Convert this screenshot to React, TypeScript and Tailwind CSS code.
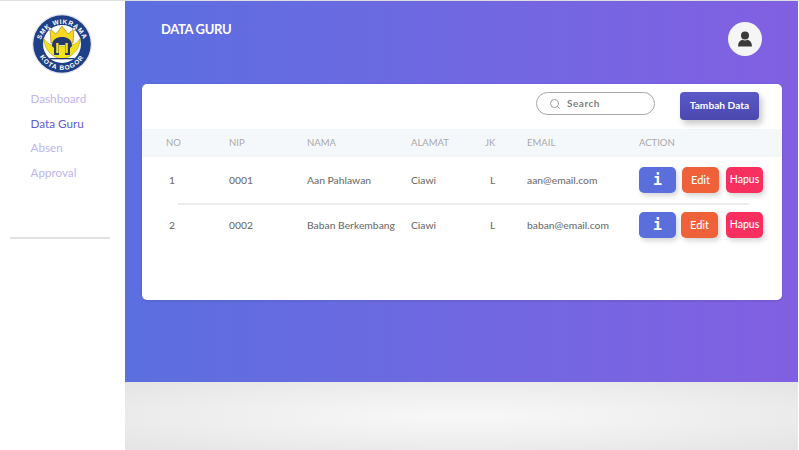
import { Search } from 'lucide-react';

const MENU = [
  { label: 'Dashboard', active: false },
  { label: 'Data Guru', active: true },
  { label: 'Absen', active: false },
  { label: 'Approval', active: false },
];

const GURU = [
  { no: 1, nip: '0001', nama: 'Aan Pahlawan', alamat: 'Ciawi', jk: 'L', email: 'aan@email.com' },
  { no: 2, nip: '0002', nama: 'Baban Berkembang', alamat: 'Ciawi', jk: 'L', email: 'baban@email.com' },
];

const COLS = 'grid grid-cols-[63px_78px_104px_74px_42px_112px_1fr] pl-6';

function Logo() {
  return (
    <svg width="60" height="60" viewBox="0 0 60 60">
      <defs>
        <path id="arcTop" d="M 8 32 A 22 22 0 0 1 52 32" />
        <path id="arcBottom" d="M 5.5 36 A 25 25 0 0 0 54.5 36" />
      </defs>
      <circle cx="30" cy="30" r="29.5" fill="#ffffff" stroke="#c9cfe0" strokeWidth="0.6" />
      <circle cx="30" cy="30" r="28.8" fill="#1f3f86" />
      <circle cx="30" cy="30" r="19" fill="#ffffff" />
      <text fontSize="6.5" fontWeight="700" fill="#ffffff" fontFamily="'Liberation Sans', sans-serif" letterSpacing="0.7">
        <textPath href="#arcTop" startOffset="50%" textAnchor="middle">SMK WIKRAMA</textPath>
      </text>
      <text fontSize="6.5" fontWeight="700" fill="#ffffff" fontFamily="'Liberation Sans', sans-serif" letterSpacing="1">
        <textPath href="#arcBottom" startOffset="50%" textAnchor="middle">KOTA BOGOR</textPath>
      </text>
      <path d="M11.5 24 C12 36 21 44 30 45 C39 44 48 36 48.5 24 C45 30 41 32 30 32 C19 32 15 30 11.5 24Z" fill="#f4e21c" stroke="#8a8a20" strokeWidth="0.5" />
      <path d="M18 15 L24 20 L30 12 L36 20 L42 15 L41 29 H19Z" fill="#f6d91e" stroke="#8f7a10" strokeWidth="0.6" />
      <path d="M20 32 C20 25 25 23 30 23 C35 23 40 25 40 32 L38 34 L38 41 H33 V31 H27 V41 H22 V34Z" fill="#24386e" />
      <rect x="24.2" y="29" width="2.4" height="10" fill="#f4e21c" />
      <rect x="33.4" y="29" width="2.4" height="10" fill="#f4e21c" />
      <circle cx="18" cy="15" r="1.5" fill="#ffffff" stroke="#555" strokeWidth="0.4" />
      <circle cx="42" cy="15" r="1.5" fill="#ffffff" stroke="#555" strokeWidth="0.4" />
      <rect x="18" y="44" width="24" height="1.3" fill="#24386e" />
    </svg>
  );
}

function UserIcon() {
  return (
    <svg width="16" height="16" viewBox="0 0 16 16" fill="#3a3a3a">
      <circle cx="8" cy="4.4" r="4" />
      <path d="M1 15.5 C1 11.5 3 9.2 5.4 8.8 C7 9.8 9 9.8 10.6 8.8 C13 9.2 15 11.5 15 15.5Z" />
    </svg>
  );
}

function ActionButtons({ editShift }: { editShift: boolean }) {
  return (
    <div className="flex items-center">
      <button className="w-[37px] h-[26px] rounded-[5px] bg-[#5a6fdc] text-white text-[15px] leading-none font-bold flex items-center justify-center shadow-[2px_3px_5px_rgba(0,0,0,0.16)] font-['DejaVu_Sans_Mono',monospace]">
        i
      </button>
      <button
        className={`w-[37px] h-[26px] rounded-[5px] bg-[#ee6139] text-white text-[11px] flex items-center justify-center shadow-[2px_3px_5px_rgba(0,0,0,0.16)] ${
          editShift ? 'ml-[5px] mr-[8px]' : 'ml-[6px] mr-[7px]'
        }`}
      >
        Edit
      </button>
      <button className="w-[37px] h-[26px] rounded-[5px] bg-[#f8305f] text-white text-[10.5px] flex items-center justify-center shadow-[2px_3px_5px_rgba(0,0,0,0.16)]">
        Hapus
      </button>
    </div>
  );
}

export default function App() {
  return (
    <div className="w-[799px] h-[450px] overflow-hidden flex bg-white font-['Lato',sans-serif] border-t border-[#dedede]">
      {/* Sidebar */}
      <aside className="w-[125px] shrink-0 bg-white flex flex-col">
        <div className="pt-[13px] pl-[32px]">
          <Logo />
        </div>
        <nav className="mt-[14px] pl-[30.5px] flex flex-col gap-[4.7px]">
          {MENU.map((m) => (
            <a
              key={m.label}
              className={`text-[11.7px] leading-[20px] ${m.active ? 'text-[#5f5bd0]' : 'text-[#bcb6ee]'}`}
            >
              {m.label}
            </a>
          ))}
        </nav>
        <div className="mt-[55px] ml-[10px] w-[100px] h-[2px] bg-[#e2e2e2]" />
      </aside>

      {/* Main */}
      <main className="w-[673px] flex flex-col">
        <section className="h-[381px] bg-linear-to-r from-[#5b6fe0] to-[#8160e2] px-[17px] flex flex-col">
          <div className="flex items-start justify-between h-[83px]">
            <h1 className="mt-[18px] ml-[19px] text-white text-[13px] leading-[20px] font-bold tracking-[-0.35px]">
              DATA GURU
            </h1>
            <div className="mt-[21px] mr-[19px] w-[34px] h-[34px] rounded-full bg-[#f5f5f5] flex items-center justify-center">
              <UserIcon />
            </div>
          </div>

          <div className="w-[640px] h-[216px] bg-white rounded-[5px] shadow-[0_1px_3px_rgba(0,0,0,0.1)]">
            {/* Toolbar */}
            <div className="h-[45px] flex items-start justify-end pt-2 pr-[23px]">
              <div className="w-[119px] h-[23px] rounded-full border-[1.5px] border-[#a6a6a6] flex items-center pl-[12px] gap-[6px]">
                <Search size={12} className="text-[#9a9a9a]" />
                <span className="text-[10px] font-bold tracking-[0.5px] text-[#808080]">Search</span>
              </div>
              <button className="ml-[25px] w-[79px] h-[28px] rounded-[4px] bg-linear-to-b from-[#5a59c8] to-[#4b48ae] text-white text-[10.2px] font-bold shadow-[3px_4px_6px_rgba(0,0,0,0.22)]">
                Tambah Data
              </button>
            </div>

            {/* Table */}
            <div className={`${COLS} h-[28px] pt-[1px] items-center bg-[#f5f8fb] text-[9.5px] text-[#a9a9a9]`}>
              <span>NO</span>
              <span>NIP</span>
              <span>NAMA</span>
              <span>ALAMAT</span>
              <span>JK</span>
              <span>EMAIL</span>
              <span>ACTION</span>
            </div>
            {GURU.map((g, i) => (
              <div key={g.no}>
                {i > 0 && <div className="ml-9 mr-[33px] h-[2px] bg-[#ececec]" />}
                <div className={`${COLS} items-center text-[10.3px] font-medium text-[#6f6f6f] ${i === 0 ? 'h-[46px]' : 'h-[40px]'}`}>
                  <span className="pl-[3px] pt-[2px]">{g.no}</span>
                  <span className="pt-[2px]">{g.nip}</span>
                  <span className="pt-[2px]">{g.nama}</span>
                  <span className="pt-[2px]">{g.alamat}</span>
                  <span className="pl-[5px] pt-[2px]">{g.jk}</span>
                  <span className="pt-[2px]">{g.email}</span>
                  <ActionButtons editShift={i === 1} />
                </div>
              </div>
            ))}
          </div>
        </section>
        <section className="flex-1 bg-[radial-gradient(ellipse_at_center,#f8f8f8_0%,#eeeeee_55%,#e4e4e4_100%)]" />
      </main>
      <div className="w-px bg-white" />
    </div>
  );
}
